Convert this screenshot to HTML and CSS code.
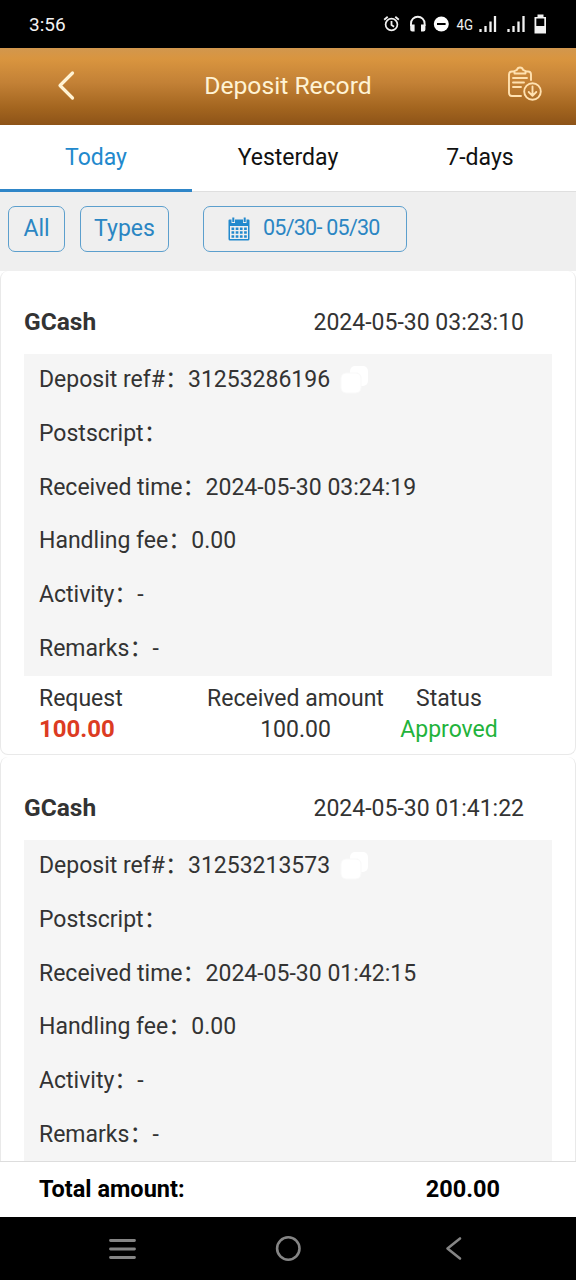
FILE: index.html
```html
<!DOCTYPE html>
<html lang="en">
<head>
<meta charset="utf-8">
<title>Deposit Record</title>
<link rel="stylesheet" href="styles.css">
</head>
<body>
<div class="screen">
  <div class="status-bar">
    <span class="clock">3:56</span>
    <svg class="status-icons" width="172" height="24" viewBox="0 0 172 24" fill="none" stroke="#f2f2f2">
      <circle cx="11.5" cy="12.5" r="5.9" stroke-width="1.7"/>
      <path d="M11.5 9v4l2.6 1.7M4.2 7.8l3.5-3M18.800 7.800l-3.500-3" stroke-width="1.800"/>
      <path d="M31 14v-2.500a6.800 6.800 0 0 1 13.600 0V14" stroke-width="1.900"/>
      <path d="M30.200 12.500h4.400v7h-2.400a2 2 0 0 1-2-2zM45.400 12.500H41v7h2.400a2 2 0 0 0 2-2z" fill="#f2f2f2" stroke="none"/>
      <circle cx="61.300" cy="12" r="7.500" fill="#fff" stroke="none"/>
      <path d="M57 12h8.600" stroke="#000" stroke-width="2"/>
      <path d="M100.500 17v3M105.500 14v6M110.500 9.500v10.500M115 4v16M128.500 17v3M133.500 14v6M138.500 9.500v10.500M143.500 4v16" stroke-width="2.300"/>
      <path d="M154.500 5h3V2.500h6V5h2.500v16.500h-11.500z" fill="#f2f2f2" stroke="none"/>
      <path d="M156.300 6.500h8v7.500h-8z" fill="#000" stroke="none"/>
      <text class="network" x="76.500" y="18" textLength="16.500" lengthAdjust="spacingAndGlyphs">4G</text>
    </svg>
  </div>
  <header class="header">
    <svg class="back" width="20" height="32" viewBox="0 0 20 32" fill="none" stroke="#fff3d4" stroke-width="3.200" stroke-linecap="round" stroke-linejoin="round"><path d="M15.500 3L3 15.500L15.500 28"/></svg>
    <h1 class="title">Deposit Record</h1>
    <svg class="record" width="36" height="36" viewBox="0 0 36 36" fill="none" stroke="#ffe1b0" stroke-width="1.900" stroke-linecap="round" stroke-linejoin="round">
      <path d="M7 5.500H5a3 3 0 0 0-3 3v18.500a3 3 0 0 0 3 3h9M19 5.500h2a3 3 0 0 1 3 3v5.500"/>
      <path d="M7.500 7.500V5l2.500-1.200q.5-2.300 3-2.300t3 2.300l2.500 1.200v2.500z"/>
      <path d="M6 12h14M6 16.500h11M6 21h8"/>
      <circle cx="25.500" cy="25.500" r="8.300"/>
      <path d="M25.500 20.500v9M21.700 26l3.800 3.800l3.800-3.800"/>
    </svg>
  </header>
  <nav class="tabs">
    <a class="tab tab-active">Today</a>
    <a class="tab">Yesterday</a>
    <a class="tab">7-days</a>
  </nav>
  <div class="filters">
    <button class="filter all">All</button>
    <button class="filter types">Types</button>
    <button class="filter date">
      <svg width="22" height="24" viewBox="0 0 22 24"><path fill="#2289cd" fill-rule="evenodd" d="M1.500 2.500h2v3.500h3.500V2.500h8v3.500h3.500V2.500h2q1 0 1 1V22q0 1.500-1.500 1.500H2Q.5 23.500.5 22V3.500q0-1 1-1zM2 9v12.900h18V9z"/><path stroke="#2289cd" stroke-width="2" d="M5.300 .5v4.500M16.700 .5v4.500"/><path stroke="#2289cd" stroke-width="2.500" stroke-dasharray="2.700 1.500" d="M3.500 11.700h15.500M3.500 15.600h15.500M3.500 19.500h15.500"/></svg>
      <span class="range">05/30- 05/30</span>
    </button>
  </div>
  <main class="records">
    <article class="card">
      <div class="card-head"><strong class="method">GCash</strong><time class="stamp">2024-05-30 03:23:10</time></div>
      <div class="details">
        <div class="row">Deposit ref#<span class="colon">：</span>31253286196
          <svg class="copy" width="30" height="30" viewBox="0 0 30 30" fill="#fff"><rect x="10" y="2" width="18" height="20" rx="5"/><rect x="1" y="9" width="20" height="20" rx="5" stroke="#f9f9f9"/></svg></div>
        <div class="row">Postscript<span class="colon">：</span></div>
        <div class="row">Received time<span class="colon">：</span>2024-05-30 03:24:19</div>
        <div class="row">Handling fee<span class="colon">：</span>0.00</div>
        <div class="row">Activity<span class="colon">：</span>-</div>
        <div class="row">Remarks<span class="colon">：</span>-</div>
      </div>
      <div class="summary">
        <div class="cell request"><span>Request</span><strong class="requested">100.00</strong></div>
        <div class="cell received"><span>Received amount</span><span>100.00</span></div>
        <div class="cell state"><span>Status</span><span class="approved">Approved</span></div>
      </div>
    </article>
    <article class="card">
      <div class="card-head"><strong class="method">GCash</strong><time class="stamp">2024-05-30 01:41:22</time></div>
      <div class="details">
        <div class="row">Deposit ref#<span class="colon">：</span>31253213573
          <svg class="copy" width="30" height="30" viewBox="0 0 30 30" fill="#fff"><rect x="10" y="2" width="18" height="20" rx="5"/><rect x="1" y="9" width="20" height="20" rx="5" stroke="#f9f9f9"/></svg></div>
        <div class="row">Postscript<span class="colon">：</span></div>
        <div class="row">Received time<span class="colon">：</span>2024-05-30 01:42:15</div>
        <div class="row">Handling fee<span class="colon">：</span>0.00</div>
        <div class="row">Activity<span class="colon">：</span>-</div>
        <div class="row">Remarks<span class="colon">：</span>-</div>
      </div>
    </article>
  </main>
  <footer class="total"><strong>Total amount:</strong><strong class="sum">200.00</strong></footer>
  <div class="nav-bar">
    <svg width="28" height="28" viewBox="0 0 28 28" fill="none" stroke="#858585" stroke-width="2.800" stroke-linecap="round"><path d="M2.500 5.500h24M2.500 14h24M2.500 22.500h24"/></svg>
    <svg width="28" height="28" viewBox="0 0 28 28" fill="none" stroke="#858585" stroke-width="2.600"><circle cx="14.300" cy="13.500" r="11.200"/></svg>
    <svg width="28" height="28" viewBox="0 0 28 28" fill="none" stroke="#858585" stroke-width="2.600" stroke-linecap="round" stroke-linejoin="round"><path d="M20 3.500L7.500 13.500L20 23.500"/></svg>
  </div>
</div>
</body>
</html>
```
FILE: styles.css
```css
* { box-sizing: border-box; }
body { margin: 0; }
.screen {
  width: 576px; height: 1280px; overflow: hidden;
  display: flex; flex-direction: column;
  font: 23px/30px Roboto, "Noto Sans CJK SC", sans-serif;
  color: #333; background: #fff;
}
.status-bar {
  height: 48px; flex: none; background: #000; color: #f2f2f2;
  display: flex; align-items: center; justify-content: space-between;
  padding: 0 24px 0 29px;
}
.clock { font-size: 19px; padding-top: 2px; }
.network { font: 15.500px Roboto, sans-serif; fill: #f2f2f2; stroke: none; }
.header {
  height: 77px; flex: none; display: grid; grid-template-columns: 192px 192px 192px;
  align-items: center; justify-items: center;
  background: linear-gradient(#d2974e 0, #d9953f 14%, #c38136 45%, #a3651f 78%, #8d5318 100%);
}
.back { margin: -2px 0 0 -59px; }
.title { margin: -1px 0 0; font-size: 24.700px; font-weight: 400; color: #fff3d4; white-space: nowrap; }
.record { justify-self: end; margin: 0 33px 6px 0; }
.tabs { height: 67px; flex: none; display: flex; border-bottom: 1px solid #dfdfdf; }
.tab { width: 192px; height: 67px; padding-top: 18px; text-align: center; color: #111; }
.tab-active { color: #2289cd; border-bottom: 3px solid #2f86c8; }
.filters { height: 79px; flex: none; padding: 13.500px 8px; display: flex; background: #efefef; }
.filter {
  height: 46px; padding: 0; border: 1px solid #5c9fcd; border-radius: 7px;
  background: none; color: #2b86c3; font: inherit;
}
.all { width: 57px; }
.types { width: 89px; margin-left: 15px; }
.date { width: 204px; margin-left: 34px; display: flex; align-items: center; padding: 0 0 0 24px; }
.range { margin-left: 13px; padding-bottom: 2px; font-size: 21.500px; letter-spacing: -.750px; white-space: nowrap; }
.records { flex: 1; min-height: 0; overflow: hidden; }
.card { height: 486px; padding: 0 23px; border: 1px solid #e9e9e9; border-top: 0; border-radius: 8px; }
.card:first-child { height: 484px; margin-bottom: 2px; }
.card-head { height: 82.500px; padding-top: 36px; display: flex; justify-content: space-between; }
.stamp { padding: 1px 28px 0 0; }
.method { font-size: 24.500px; }
.details { background: #f5f5f5; padding-left: 15px; }
.row { height: 53.750px; padding-top: 11.500px; display: flex; white-space: nowrap; }
.copy { margin: -1px 0 0 10px; }
.summary { display: flex; padding: 7px 0 0 15px; }
.cell { display: flex; flex-direction: column; align-items: center; line-height: 31px; white-space: nowrap; }
.request { width: 168px; align-items: flex-start; }
.received { width: 177px; }
.state { width: 130px; }
.requested { color: #dc3b22; font-size: 24px; }
.approved { color: #22b33b; }
.total {
  height: 56px; flex: none; padding: 0 76px 2px 39px; border-top: 1px solid #ddd;
  display: flex; align-items: center; justify-content: space-between; color: #000; font-size: 23.500px;
}
.nav-bar {
  height: 63px; flex: none; background: #000; padding: 0 108px;
  display: flex; align-items: center; justify-content: space-between;
}
```
